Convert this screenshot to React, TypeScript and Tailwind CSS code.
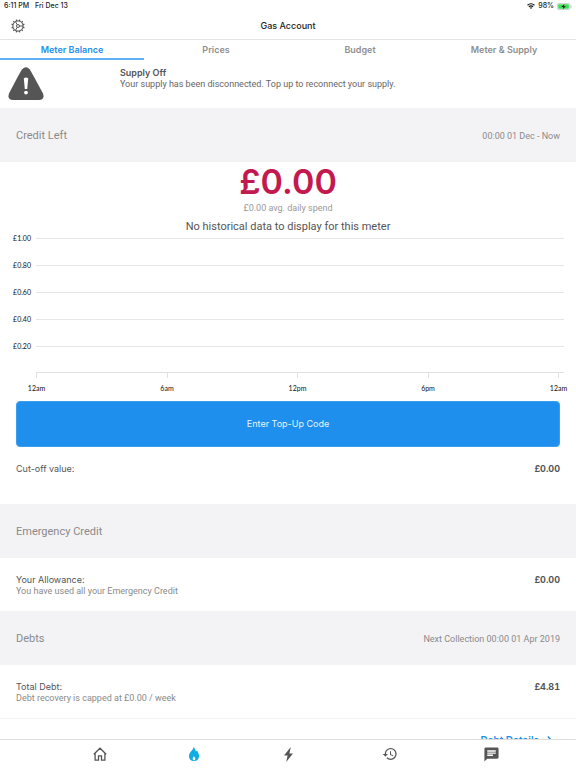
import type { ReactNode } from "react";
import { MdHistory, MdChat } from "react-icons/md";

const tabs = ["Meter Balance", "Prices", "Budget", "Meter & Supply"];
const yLabels = ["£1.00", "£0.80", "£0.60", "£0.40", "£0.20"];
const xLabels = ["12am", "6am", "12pm", "6pm", "12am"];

function StatusBar() {
  return (
    <div className="flex h-3 items-center justify-between px-1 text-[7px] leading-3 font-medium text-[#222]">
      <div className="flex gap-1.5">
        <span>6:11 PM</span>
        <span>Fri Dec 13</span>
      </div>
      <div className="flex items-center gap-[3px]">
        <svg className="h-[6px] w-2" viewBox="0 0 16 12" fill="none" stroke="#111" strokeWidth="2.4">
          <path d="M1 4.5Q8-1.5 15 4.5" />
          <path d="M3.8 7.4Q8 3.8 12.2 7.4" />
          <path d="M8 12 5.6 9.4Q8 7.6 10.4 9.4Z" fill="#111" stroke="none" />
        </svg>
        <span>98%</span>
        <svg className="h-[7px] w-[15px]" viewBox="0 0 30 14">
          <rect x="0.7" y="0.7" width="25" height="12.6" rx="3.4" fill="#fff" stroke="#aaa" strokeWidth="1.2" />
          <rect x="2.4" y="2.4" width="21.4" height="9.2" rx="2" fill="#3fdc58" />
          <path d="M14.8 1.8 8.6 7.8h4l-1.2 4.6L17.6 6.4h-4z" fill="#111" />
          <path d="M27.4 4.6v4.8q2-.8 2-2.4t-2-2.4z" fill="#aaa" />
        </svg>
      </div>
    </div>
  );
}

function GearIcon() {
  const teeth = Array.from({ length: 12 }, (_, i) => i * 30);
  return (
    <svg className="size-[14px]" viewBox="0 0 28 28" fill="none" stroke="#555" strokeWidth="2">
      <circle cx="14" cy="14" r="10.2" />
      <circle cx="14" cy="14" r="3" />
      <path d="M17 14h7M12.5 11.4 9 5.4M12.5 16.6 9 22.6" />
      {teeth.map((a) => (
        <path key={a} d="M14 3.6V.8" strokeWidth="2.8" transform={`rotate(${a + 15} 14 14)`} />
      ))}
    </svg>
  );
}

function SectionHeader({ title, note }: { title: string; note?: string }) {
  return (
    <div className="flex h-[54px] shrink-0 items-center justify-between bg-[#f3f3f6] px-4 pt-0.5 font-['Roboto','Inter',sans-serif] text-[#8a8a8a]">
      <h2 className="text-[11px] leading-4">{title}</h2>
      {note && <span className="text-[9px] leading-4">{note}</span>}
    </div>
  );
}

function Row({ label, note, value }: { label: string; note?: string; value: string }) {
  return (
    <div className="flex justify-between px-4 pt-4 text-[#555]">
      <div className="text-[9px] leading-[11px]">
        <p>{label}</p>
        {note && <p className="font-['Roboto','Inter',sans-serif] leading-[13px] text-[#8a8a8a]">{note}</p>}
      </div>
      <p className="text-[9px] leading-[11px] font-bold tabular-nums">{value}</p>
    </div>
  );
}

function NavButton({ label, children }: { label: string; children: ReactNode }) {
  return (
    <button type="button" aria-label={label} className="flex items-center justify-center text-[#555]">
      {children}
    </button>
  );
}

export default function App() {
  return (
    <div className="flex h-screen flex-col overflow-hidden bg-white font-['Inter','Liberation_Sans',sans-serif]">
      <StatusBar />
      <header className="grid h-7 shrink-0 grid-cols-[1fr_auto_1fr] items-center border-b border-[#e4e4e4] px-[11px]">
        <button type="button" aria-label="Settings" className="justify-self-start">
          <GearIcon />
        </button>
        <h1 className="text-[9px] leading-4 font-medium text-[#222]">Gas Account</h1>
      </header>
      <nav className="grid h-5 shrink-0 grid-cols-4">
        {tabs.map((t, i) => (
          <button
            key={t}
            type="button"
            className={
              i === 0
                ? "border-b-2 border-[#5cb0f3] pt-px text-[9px] leading-[17px] font-semibold text-[#1e8fec]"
                : "border-b-2 border-transparent pt-px text-[9px] leading-[17px] font-semibold text-[#8f8f8f]"
            }
          >
            {t}
          </button>
        ))}
      </nav>

      <main className="min-h-0 flex-1 overflow-hidden">
        <section className="flex h-12 items-start pt-[7px] pl-2">
          <svg className="h-[33px] w-9 shrink-0" viewBox="0 0 36 33">
            <path d="M14.2 2.2Q18-1.8 21.6 2.2Q23.5 5 35 26.5Q37 33 31 33H5Q-1 33 1 26.5Q12 5 14.2 2.2Z" fill="#555" />
            <path d="M15.8 11.2q2.2-1.6 4.4 0l-1 10.8h-2.4z" fill="#fff" />
            <circle cx="18" cy="25.6" r="1.9" fill="#fff" />
          </svg>
          <div className="ml-19 text-[9px] leading-[11px] text-[#666]">
            <p className="font-semibold text-[#555]">Supply Off</p>
            <p className="font-['Roboto','Inter',sans-serif] leading-[13px]">
              Your supply has been disconnected. Top up to reconnect your supply.
            </p>
          </div>
        </section>

        <SectionHeader title="Credit Left" note="00:00 01 Dec - Now" />
        <section className="text-center">
          <p className="text-[34px] leading-10 font-semibold text-[#c2194f]">£0.00</p>
          <p className="font-['Roboto','Inter',sans-serif] text-[9px] leading-3 text-[#999]">£0.00 avg. daily spend</p>
          <p className="mt-1 font-['Roboto','Inter',sans-serif] text-[11px] leading-[18px] text-[#555]">
            No historical data to display for this meter
          </p>
        </section>

        <section className="-mt-1 font-['Lato','Open_Sans',sans-serif] text-[7px] leading-3 text-[#111]">
          {yLabels.map((l) => (
            <div key={l} className="flex h-[27px] items-start gap-[5px] pr-3">
              <span className="w-[31px] text-right">{l}</span>
              <div className="flex h-3 flex-1 items-center">
                <div className="h-px w-full bg-[#e6e6e6]" />
              </div>
            </div>
          ))}
          <div className="mt-[5px] mr-3 ml-9 border-t border-[#e0e0e0]">
            <div className="mr-[5px] flex justify-between">
              {xLabels.map((l, i) => (
                <div key={i} className="flex w-px flex-col items-center">
                  <div className="h-[5px] w-px bg-[#e0e0e0]" />
                  <span className="mt-1">{l}</span>
                </div>
              ))}
            </div>
          </div>
        </section>

        <div className="px-4 pt-[7px]">
          <button type="button" className="h-[46px] w-full rounded border border-[#3b9ff0] bg-[#1e8fec] text-[9px] text-[#e8f4ff]">
            Enter Top-Up Code
          </button>
        </div>

        <div className="h-[57px]">
          <Row label="Cut-off value:" value="£0.00" />
        </div>
        <SectionHeader title="Emergency Credit" />
        <div className="h-[53px]">
          <Row label="Your Allowance:" note="You have used all your Emergency Credit" value="£0.00" />
        </div>
        <SectionHeader title="Debts" note="Next Collection 00:00 01 Apr 2019" />
        <div className="h-[54px] border-b border-[#f3f3f3]">
          <Row label="Total Debt:" note="Debt recovery is capped at £0.00 / week" value="£4.81" />
        </div>
        <div className="flex justify-end px-6 pt-[15px]">
          <a href="#debts" className="flex items-center gap-2 text-[10px] leading-3 font-semibold text-[#1e8fec]">
            Debt Details
            <svg className="h-2 w-[5px]" viewBox="0 0 5 8" fill="none" stroke="currentColor" strokeWidth="1.4">
              <path d="m.8.6 3.4 3.4L.8 7.4" />
            </svg>
          </a>
        </div>
      </main>

      <nav className="grid h-[29px] shrink-0 grid-cols-[94fr_94fr_94fr_109fr_94fr] border-t border-[#dedede] bg-white pr-[38px] pl-[53px]">
        <NavButton label="Home">
          <svg className="h-[14px] w-[14px]" viewBox="0 0 14 14" fill="none" stroke="currentColor" strokeWidth="1.3">
            <path d="M.8 7.2 7 1.2l6.2 6M2.1 6.2v6.9h3.4V8.9h3v4.2h3.4V6.2" />
          </svg>
        </NavButton>
        <NavButton label="Gas">
          <svg className="h-[14px] w-[10px]" viewBox="0 0 10 14" fill="#10ade4">
            <path d="M4.6 0C6 1.6 6.4 3 7 4.6L8 3.6C9 5.4 10 7 10 9c0 3-2 5-5 5s-5-2-5-5c0-1.8.8-3 1.7-4.2C3 3.2 4.4 2 4.6 0Z" />
            <path d="M5 9.2c.8 1.1 1.3 1.7 1.3 2.6 0 .9-.5 1.5-1.3 1.5s-1.3-.6-1.3-1.5c0-.9.5-1.5 1.3-2.6Z" fill="#fff" />
          </svg>
        </NavButton>
        <NavButton label="Electricity">
          <svg className="h-[15px] w-[9px]" viewBox="0 0 9 15" fill="currentColor">
            <path d="M6.8 0 0 8.4h3.6L2.2 15 9 6.4H5.4z" />
          </svg>
        </NavButton>
        <NavButton label="History">
          <MdHistory className="size-4" />
        </NavButton>
        <NavButton label="Messages">
          <MdChat className="size-[17px]" />
        </NavButton>
      </nav>
    </div>
  );
}
